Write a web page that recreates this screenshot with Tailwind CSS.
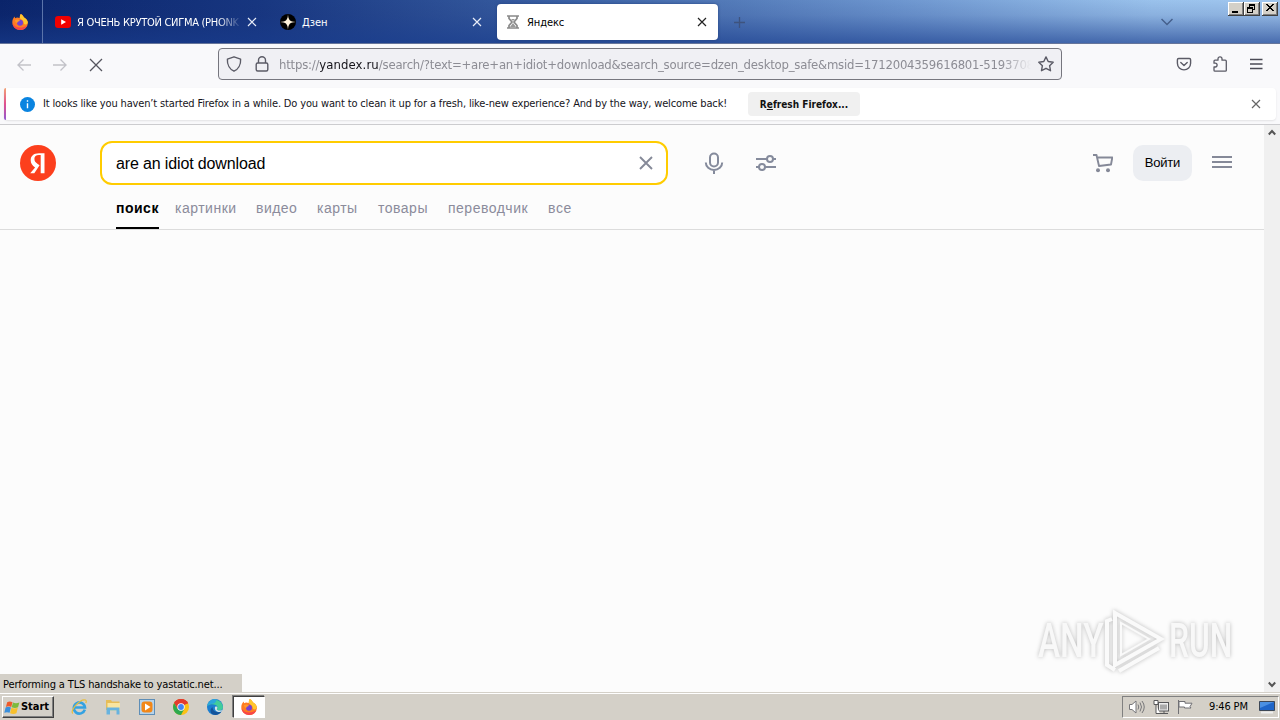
<!DOCTYPE html>
<html lang="ru">
<head>
<meta charset="utf-8">
<title>Яндекс</title>
<script src="https://cdn.jsdelivr.net/npm/@tailwindcss/browser@4"></script>
</head>
<body class="w-[1280px] h-[720px] overflow-hidden flex flex-col bg-[#fcfcfc] text-black font-['DejaVu_Sans_Condensed','DejaVu_Sans',sans-serif] [font-stretch:condensed] text-[11px] whitespace-nowrap">

<!-- Tab strip -->
<header class="h-11 shrink-0 flex border-b border-[#66759a] bg-[linear-gradient(to_bottom,transparent_0%,rgba(25,50,125,.12)_35%,rgba(25,60,140,.65)_100%),linear-gradient(to_right,#0a246a_0%,#173680_20%,#3c62a5_45%,#6d96cf_70%,#9ac2ec_90%,#a0c6ee_100%)]">
  <div class="w-[43px] h-[43px] border-r border-[#5b74aa] flex items-center pl-3">
    <svg class="size-4" viewBox="0 0 16 16"><use href="#fx"/></svg>
  </div>
  <div class="w-[226px] flex items-center pl-3 text-white">
    <svg class="w-4 h-3 shrink-0" viewBox="0 0 16 12"><rect width="16" height="12" rx="3" fill="#f00000"/><path d="M6.2 3.2v5.6L11 6z" fill="#fff"/></svg>
    <span id="t1" class="ml-[6px] w-[165px] shrink-0 overflow-hidden tracking-[-0.28px] pt-[3px] [mask-image:linear-gradient(to_right,#000_85%,transparent)]">Я ОЧЕНЬ КРУТОЙ СИГМА (PHONK</span>
    <svg class="ml-[5px] size-[10px] shrink-0" viewBox="0 0 10 10"><path d="M1 1l8 8M9 1l-8 8" stroke="#e8edf8" stroke-width="1.2"/></svg>
  </div>
  <div class="w-[228px] flex items-center pl-[11px] text-white">
    <svg class="size-4" viewBox="0 0 16 16"><circle cx="8" cy="8" r="8" fill="#000"/><path d="M8 0c.2 6 2 7.8 8 8-6 .2-7.800 2-8 8-.2-6-2-7.800-8-8 6-.2 7.800-2 8-8z" fill="#fff3dc"/></svg>
    <span class="ml-[6px] pt-[3px] flex-1">Дзен</span>
    <svg class="mr-[15px] size-[10px]" viewBox="0 0 10 10"><path d="M1 1l8 8M9 1l-8 8" stroke="#e8edf8" stroke-width="1.2"/></svg>
  </div>
  <div class="mt-1 h-9 w-[221px] rounded bg-white flex items-center pl-[10px] shadow-[0_0_3px_#24417f]">
    <svg class="w-3 h-[14px]" viewBox="0 0 12 14" fill="none" stroke="#898989" stroke-width="1.7"><path d="M0 1h12M0 13h12M2 1v2.500L5 7l-3 3.500V13M10 1v2.500L7 7l3 3.500V13"/><path d="M4 4h4L6 6zM6 8l3 4H3z" fill="#999" stroke="none"/></svg>
    <span class="ml-2 pt-[3px] flex-1 tracking-[-0.1px]">Яндекс</span>
    <svg class="mr-[11px] size-[10px]" viewBox="0 0 10 10"><path d="M1 1l8 8M9 1l-8 8" stroke="#222" stroke-width="1.2"/></svg>
  </div>
  <svg class="ml-4 mt-[17px] size-[11px]" viewBox="0 0 11 11"><path d="M5.500 0v11M0 5.500h11" stroke="#3e537e" stroke-width="1.300"/></svg>
  <svg class="ml-[416px] mt-[18px] w-3 h-[8px]" viewBox="0 0 12 8"><path d="M.5 1L6 6.500 11.500 1" fill="none" stroke="#46608c" stroke-width="1.500"/></svg>
  <div class="ml-auto mr-[2px] mt-[2px] flex h-[14px]">
    <svg class="w-4 h-[14px]" viewBox="0 0 16 14" shape-rendering="crispEdges"><use href="#btn"/><path d="M4 9h6v2H4z"/></svg>
    <svg class="w-4 h-[14px]" viewBox="0 0 16 14" shape-rendering="crispEdges"><use href="#btn"/><path d="M5 2h6v1H5zM5 3h6v1H5zM5 4h1v1H5zM10 4h1v4h-1zM9 7h1v1H9zM3 5h6v2H3zM3 7h1v4H3zM8 7h1v4H8zM3 10h6v1H3z"/></svg>
    <svg class="ml-[2px] w-4 h-[14px]" viewBox="0 0 16 14" shape-rendering="crispEdges"><use href="#btn"/><path d="M4 2h2v1h1v1h2V3h1V2h2v1h-1v1h-1v1H9v1h1v1h1v1h1v1h-2V8H9V7H7v1H6v1H4V8h1V7h1V6h1V5H6V4H5V3H4z"/></svg>
  </div>
</header>

<!-- Navigation toolbar -->
<div class="h-11 shrink-0 bg-[#f9f9fb] flex items-start text-[#5b5b66]">
  <svg class="ml-4 mt-[13px] size-4" viewBox="0 0 16 16" fill="none" stroke="#c2c2c8" stroke-width="1.300"><path d="M15 8H1.500M7.500 2.500L2 8l5.500 5.500"/></svg>
  <svg class="ml-5 mt-[13px] size-4" viewBox="0 0 16 16" fill="none" stroke="#c2c2c8" stroke-width="1.300"><path d="M1 8h13.500M8.500 2.500L14 8l-5.500 5.500"/></svg>
  <svg class="ml-5 mt-[13px] size-4" viewBox="0 0 16 16" fill="none" stroke="#55555e" stroke-width="1.300"><path d="M2 2l12 12M14 2L2 14"/></svg>
  <div class="ml-[114px] mt-1 w-[844px] h-8 border border-[#76767e] rounded bg-[#f0f0f4] flex items-center">
    <svg class="ml-[7px] size-4" viewBox="0 0 16 16" fill="none" stroke="#5b5b66" stroke-width="1.400"><path d="M8 .8l6.600 2.400C15 9 12 13.500 8 15.200 4 13.500 1 9 1.400 3.200z" stroke-linejoin="round"/></svg>
    <svg class="ml-3 size-4" viewBox="0 0 16 16" fill="none" stroke="#5b5b66" stroke-width="1.400"><rect x="2.200" y="7" width="11.600" height="8" rx="1.500"/><path d="M4.500 7V4.200a3.500 3.500 0 0 1 7 0V7"/></svg>
    <div id="url" class="ml-[9px] pt-px w-[752px] overflow-hidden font-['DejaVu_Sans_Condensed','DejaVu_Sans',sans-serif] text-[13px] tracking-[-0.22px] text-[#8c8c94] [mask-image:linear-gradient(to_right,#000_96%,transparent)]"><span>https://<span class="text-[#15141a] tracking-[0.1px]">yandex.ru</span>/search/?text=+are+an+idiot+download&amp;search_source=dzen_desktop_safe&amp;msid=1712004359616801-51937084</span></div>
    <svg class="ml-[7px] size-4 shrink-0" viewBox="0 0 16 16" fill="none" stroke="#5b5b66" stroke-width="1.400" stroke-linejoin="round"><path d="M8 .9l2.200 4.600 5 .7-3.600 3.500.9 5L8 12.300l-4.500 2.400.9-5L.8 6.200l5-.7z"/></svg>
  </div>
  <svg class="ml-[114px] mt-[12px] size-4" viewBox="0 0 16 16" fill="none" stroke="#5b5b66" stroke-width="1.400" stroke-linecap="round" stroke-linejoin="round"><path d="M2.700 2.500h10.600q1.300 0 1.300 1.300v3.500a6.600 6.600 0 0 1-13.200 0V3.800q0-1.300 1.300-1.300z"/><path d="M4.800 6.500L8 9.500l3.200-3"/></svg>
  <svg class="ml-5 mt-[12px] size-4" viewBox="0 0 16 16" fill="none" stroke="#5b5b66" stroke-width="1.300" stroke-linejoin="round"><path d="M6 4.200V2.800a2 2 0 0 1 4 0v1.400h3.300q1 0 1 1v9.200q0 .8-1 .8H3q-1 0-1-1V11h1.200a1.900 1.900 0 0 0 0-3.800H2v-2q0-1 1-1z"/></svg>
  <svg class="ml-5 mt-[12px] size-4" viewBox="0 0 16 16" fill="none" stroke="#4b4b55" stroke-width="1.300"><path d="M2 3.500h12.500M2 8h12.500M2 12.500h12.500"/></svg>
</div>

<!-- Notification bar -->
<div class="h-[37px] shrink-0 bg-[#f9f9fb] border-b border-[#cccccf] px-1 pb-1">
  <div class="h-8 w-[1272px] rounded bg-white shadow-[0_1px_2px_#00000018] flex items-center">
    <div class="w-[2px] h-8 rounded-l bg-[linear-gradient(#f2a376,#e0508f,#9059d0)]"></div>
    <svg class="ml-[14px] size-[15px] shrink-0" viewBox="0 0 15 15"><circle cx="7.500" cy="7.500" r="7.500" fill="#0a84e0"/><path d="M7.500 6.300v5M7.500 3.300v1.500" stroke="#fff" stroke-width="1.400"/></svg>
    <span id="note" class="ml-2 w-[705px] tracking-[-0.148px] text-[#15141a]">It looks like you haven’t started Firefox in a while. Do you want to clean it up for a fresh, like-new experience? And by the way, welcome back!</span>
    <div class="w-28 h-6 rounded bg-[#f0f0f0] flex items-center justify-center font-bold text-[10px] text-[#111]"><span>R<span class="underline">e</span>fresh Firefox...</span></div>
    <svg class="ml-auto mr-[15px] size-[10px]" viewBox="0 0 10 10"><path d="M1 1l8 8M9 1l-8 8" stroke="#666" stroke-width="1.200"/></svg>
  </div>
</div>

<!-- Page -->
<div class="h-[567px] shrink-0 flex font-['Liberation_Sans',sans-serif] [font-stretch:normal]">
  <main class="w-[1264px] flex flex-col bg-[#fcfcfc]">
    <div class="h-[105px] shrink-0 border-b border-[#dcdcdc]">
      <div class="h-[60px] pt-4 flex items-start">
        <svg class="ml-5 mt-1 size-9" viewBox="0 0 36 36"><circle cx="18" cy="18" r="18" fill="#fc3f1d"/><path d="M20.700 28h3.800V8h-5.500c-5.500 0-8.300 2.800-8.300 6.900 0 3.300 1.600 5.200 4.400 7.200L10.200 28h4.100l5.300-8-1.900-1.300c-2.200-1.500-3.300-2.700-3.300-5.200 0-2.200 1.600-3.700 4.500-3.700h1.800z" fill="#fff" transform="translate(0 .3)"/></svg>
        <div class="ml-11 w-[568px] h-11 border-2 border-[#fc0] rounded-xl bg-white flex items-center">
          <span id="q" class="ml-[14px] pt-px flex-1 text-[16px] tracking-[-0.14px]">are an idiot download</span>
          <svg class="mr-[13px] size-[14px]" viewBox="0 0 14 14"><path d="M1 1l12 12M13 1L1 13" stroke="#858998" stroke-width="1.900"/></svg>
        </div>
        <svg class="ml-[36px] mt-[10px] w-5 h-6" viewBox="0 0 20 24" fill="none" stroke="#858b9c" stroke-width="2"><rect x="6" y="2.500" width="8" height="13" rx="4"/><path d="M1.800 11.500a8.200 7.500 0 0 0 16.400 0M10 19v4"/></svg>
        <svg class="ml-8 mt-[13px] w-5 h-[18px]" viewBox="0 0 20 18" fill="none" stroke="#858b9c" stroke-width="2"><path d="M0 5h11M17 5h3M0 13h3M9 13h11"/><circle cx="14" cy="5" r="3"/><circle cx="6" cy="13" r="3"/></svg>
        <svg class="ml-[317px] mt-[12px] w-5 h-5" viewBox="0 0 20 20"><path d="M0 2h3.500l2.500 11 12-1.500 1.300-7H5" fill="none" stroke="#858998" stroke-width="1.900" stroke-linejoin="round"/><circle cx="5" cy="17.300" r="2" fill="#858998"/><circle cx="15" cy="17.300" r="2" fill="#858998"/></svg>
        <div class="ml-5 mt-1 w-[59px] h-9 rounded-[10px] bg-[#eceef2] flex items-center justify-center text-[13px]"><span id="login" class="tracking-[-0.2px]">Войти</span></div>
        <svg class="ml-5 mt-[14px] w-5 h-[14px]" viewBox="0 0 20 14"><path d="M0 2h20M0 7h20M0 12h20" stroke="#858998" stroke-width="2"/></svg>
      </div>
      <nav class="h-11 pl-[116px] flex text-[14px] leading-[46px] text-[#8b8b9b]">
        <span class="w-[43px] mr-4 h-11 border-b-2 border-black text-black font-bold tracking-[.5px]">поиск</span>
        <span class="w-[81px] tracking-[.5px]">картинки</span>
        <span class="w-[61px] tracking-[.45px]">видео</span>
        <span class="w-[61px] tracking-[.5px]">карты</span>
        <span class="w-[70px] tracking-[.5px]">товары</span>
        <span class="w-[100px] tracking-[.5px]">переводчик</span>
        <span class="tracking-[.6px]">все</span>
      </nav>
    </div>
    <!-- Status text and watermark along the bottom edge -->
    <div class="flex-1 flex items-end justify-between">
      <div class="w-[242px] h-[18px] bg-[#d4d0c8] pl-[3px] leading-[21px] font-['DejaVu_Sans_Condensed','DejaVu_Sans',sans-serif] [font-stretch:condensed]"><span id="status" class="tracking-[-0.13px]">Performing a TLS handshake to yastatic.net...</span></div>
      <svg class="mr-[26px] mb-[14px] w-[204px] h-[76px] [filter:drop-shadow(0_0_2px_#bbb)]" viewBox="0 0 204 76">
        <g fill="#f8f8f8" font-family="Roboto" font-weight="500" font-size="49">
          <text transform="translate(4 54.500) scale(.72 1)" textLength="91" lengthAdjust="spacingAndGlyphs">ANY</text>
          <text transform="translate(135 54.500) scale(.72 1)" textLength="88" lengthAdjust="spacingAndGlyphs">RUN</text>
        </g>
        <g fill="none" stroke="#fafafa" stroke-width="4" transform="translate(-3 1)"><path d="M84 56V10l46 26-46 26V50M81 16l-5 2v44l8 5M88 68l40-23"/><path d="M90 20v32l28-16z" stroke-width="2"/></g>
      </svg>
    </div>
  </main>
  <aside class="w-4 bg-[#f0f0f0] flex flex-col justify-between items-center pt-1 pb-1">
    <svg class="w-2 h-[7px]" viewBox="0 0 8 7"><path d="M.8 5.500L4 2l3.200 3.500" fill="none" stroke="#555" stroke-width="2"/></svg>
    <svg class="w-2 h-[7px]" viewBox="0 0 8 7"><path d="M.8 1.500L4 5l3.200-3.500" fill="none" stroke="#555" stroke-width="2"/></svg>
  </aside>
</div>

<!-- Taskbar -->
<footer class="h-7 shrink-0 bg-[#d4d0c8] border-t border-[#d4d0c8] shadow-[inset_0_1px_#fff] flex items-start pt-[3px]">
  <div class="ml-[2px] w-[52px] h-[22px] border border-t-white border-l-white border-r-[#404040] border-b-[#404040] shadow-[inset_-1px_-1px_#808080] flex items-center pl-px font-bold">
    <svg class="w-[17px] h-[17px] shrink-0" viewBox="0 0 16 16"><path d="M3 3q2.500-1.500 5 0L6.800 7.500q-2.500-1.200-5 0z" fill="#ee5a2a"/><path d="M8.500 3.300q2.500 1.300 6 0l-1.300 4.500q-2.800 1.200-6 0z" fill="#7dba3c"/><path d="M1.500 8q2.500-1.300 5 0L5.300 13q-2.500-1.200-5 0z" fill="#3a8fdc"/><path d="M7 8.300q2.700 1.200 6 0L11.700 13.500q-2.800 1.200-6 0z" fill="#f8c02c"/></svg>
    <span id="start" class="pt-px tracking-[-.05px]">Start</span>
  </div>
  <svg class="ml-[17px] mt-[3px] size-4" viewBox="0 0 16 16" fill="none"><path d="M13.800 10.600A5.600 5.600 0 1 1 14 8.500H4" stroke="#34a2e2" stroke-width="2.600"/><path d="M1.800 14.500C-1.500 12 9-.8 14.500 1c1 .5.800 2 .3 3" stroke="#e8bd3c" stroke-width="1.200"/></svg>
  <svg class="ml-[18px] mt-[3px] size-4" viewBox="0 0 16 16"><path d="M1 1h5l1 1.500h7.500V11H1z" fill="#e7bd57"/><path d="M2.500 4H15v8H2.500z" fill="#f9e5a0"/><path d="M1.500 15.500V8.500h13v7h-3v-4H5v4z" fill="#68b3df"/></svg>
  <svg class="ml-[18px] mt-[3px] size-4" viewBox="0 0 16 16"><rect x=".5" y=".5" width="15" height="15" fill="#b7d3ea" stroke="#5e8eb7"/><rect x="2.500" y="2.500" width="11" height="11" rx="3" fill="#f28718"/><path d="M6 4.500v7L11.500 8z" fill="#fff"/></svg>
  <svg class="ml-[18px] mt-[3px] size-4" viewBox="0 0 16 16"><circle cx="8" cy="8" r="8" fill="#fbc116"/><path d="M8 8L1.100 4A8 8 0 0 1 14.900 4z" fill="#e33b2e"/><path d="M8 4.500h7.200A8 8 0 0 0 1.100 4l3.600 6z" fill="#e33b2e"/><path d="M1.100 4A8 8 0 0 0 8 16l3.200-6H4.700z" fill="#2da94f"/><circle cx="8" cy="8" r="3.700" fill="#fff"/><circle cx="8" cy="8" r="2.900" fill="#4285f4"/></svg>
  <svg class="ml-[18px] mt-[3px] size-4" viewBox="0 0 16 16"><circle cx="8" cy="8" r="8" fill="#1b7ed0"/><path d="M.2 7A8 8 0 0 1 16 8c0 3-3 4-5.500 3-1.500-.7.3-1.500 0-3C9.800 5.500 4 4 .2 7z" fill="#42cc9b"/><path d="M.2 7A8 8 0 0 1 8 0c3 0 1 3-1 4.500C4 4.500 2 5.500.2 7z" fill="#2ba6dc"/><path d="M5.500 8c0 4 4 6.500 9 4.500-2 3-5.500 4-8.500 3-3-1.300-3.500-5-.5-7.500z" fill="#14539a"/><path d="M8 8c1-.8 2.200-.3 2.400.5.100.8-.9 1.500-.4 2.200 1.500 1.300 4 1 5.500.3l-.8 1.500C11.500 14 7 12 8 8z" fill="#d4e4e8"/></svg>
  <div class="ml-[10px] w-8 h-[22px] bg-white border border-t-[#404040] border-l-[#404040] border-r-white border-b-white shadow-[-1px_-1px_0_#808080] flex items-center justify-center">
    <svg class="size-4" viewBox="0 0 16 16"><g id="fx"><path d="M8.800 0c2 1.200 2.600 2.200 3 3.200 2.700 1.400 4.200 3.500 4.100 6A7.400 7.400 0 0 1 8 16 7.500 7.500 0 0 1 .3 8.300C.3 6 1.300 4 2.600 2.600l.5 1.700L5 3.500 7.800 4c0-1.500.2-3 1-4z" fill="#ff7b22"/><path d="M8.800 0c2 1.200 2.600 2.200 3 3.200 2.700 1.400 4 3.500 4 5.500-1 2-3 2.500-4 .8C12 6 8 5 7.800 4c0-1.500.2-3 1-4z" fill="#ffc72e"/><path d="M.4 9c2.500 5 9 6 14.800 2.500A7.800 7.800 0 0 1 8 16 7.500 7.500 0 0 1 .4 9z" fill="#f8464a"/><circle cx="8" cy="8.800" r="3" fill="#7542d3"/><path d="M3 6c2-1 3.500-.5 5 .5-1 1.200-2.500.8-2.800 2.500C4 9 3 8 3 6z" fill="#ff9a2b"/></g></svg>
  </div>
  <div class="ml-auto mr-px w-[157px] h-[22px] border border-t-[#808080] border-l-[#808080] border-r-white border-b-white flex items-center">
    <svg class="ml-[6px] w-4 h-4" viewBox="0 0 16 16" fill="none" stroke="#77777a"><path d="M.5 5.500H3L7 2v12l-4-3.500H.5z" fill="#fff"/><path d="M9 5.500q1.500 2.500 0 5M11 3.500q3 4.500 0 9M13 2q4.500 6 0 12"/></svg>
    <svg class="ml-2 w-4 h-4" viewBox="0 0 16 16" fill="none" stroke="#58585a"><rect x="5.500" y="3.500" width="10" height="8.500" fill="#eee"/><path d="M7 5.500h7v5H7z" fill="#aaa" stroke="none"/><path d="M7 14.500h8M11 12v2"/><path d="M1 1.500h4v4H1zM3 6v8.500h4" fill="#fff"/></svg>
    <svg class="ml-2 w-4 h-4" viewBox="0 0 16 16" fill="#fff" stroke="#707074"><path d="M1.500 1v14"/><path d="M2 2.500h6v1.700h7l-2 3.500 1 1.300H7.500V8H2z"/></svg>
    <span id="clock" class="ml-[16px] pt-px w-[41px] tracking-[-.15px]">9:46 PM</span>
    <svg class="ml-[9px] w-4 h-[14px]" viewBox="0 0 16 14"><path d="M.5 1.500h15v9H.5z" fill="#1f65c8" stroke="#3d4756"/><path d="M1 2h14L1 8z" fill="#4b90e2"/><path d="M2 12.500h12" stroke="#eee" stroke-width="2"/></svg>
  </div>
</footer>

<svg width="0" height="0" class="absolute"><defs><g id="btn"><path fill="#404040" d="M0 0h16v14H0z"/><path fill="#fff" d="M0 0h15v13H0z"/><path fill="#808080" d="M1 1h14v12H1z"/><path fill="#d4d0c8" d="M1 1h13v11H1z"/></g></defs></svg>
</body>
</html>
